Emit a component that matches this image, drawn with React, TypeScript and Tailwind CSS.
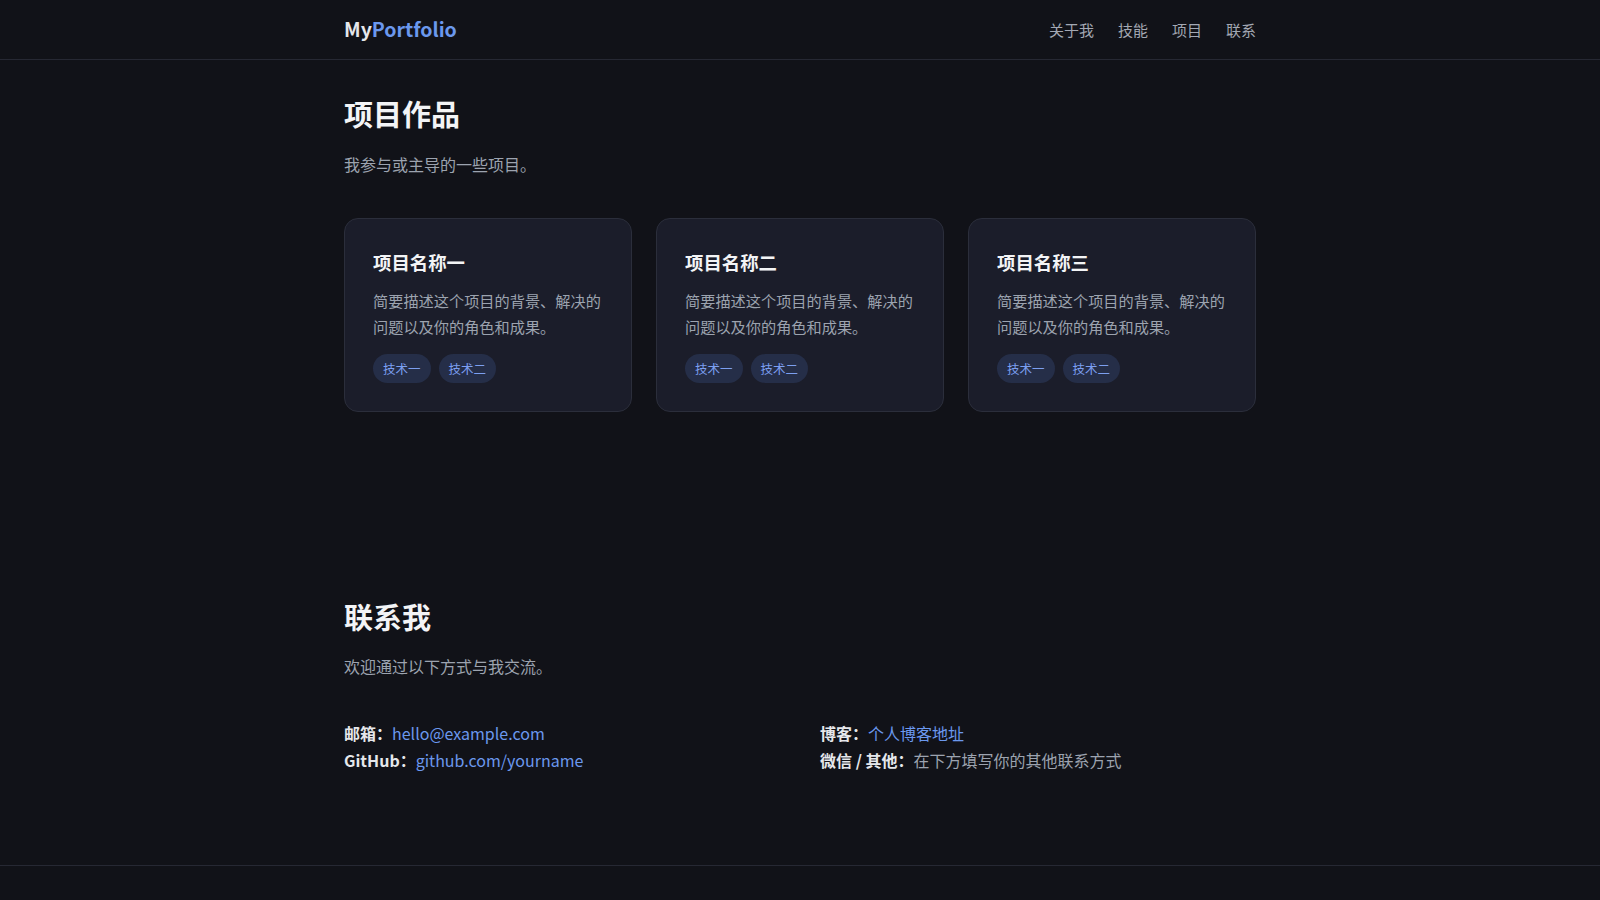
import React from 'react';

const navItems = ['关于我', '技能', '项目', '联系'];

const projects = [
  { title: '项目名称一', tags: ['技术一', '技术二'] },
  { title: '项目名称二', tags: ['技术一', '技术二'] },
  { title: '项目名称三', tags: ['技术一', '技术二'] },
];

const App: React.FC = () => {
  return (
    <div
      className="min-h-screen bg-[#111218] text-[#e5e7eb]"
      style={{ fontFamily: '"Noto Sans CJK SC", "Noto Sans", sans-serif' }}
    >
      <header className="border-b border-[#262833]">
        <div className="max-w-[960px] mx-auto px-6 h-[59px] flex items-center justify-between">
          <div className="text-[19.5px] font-bold leading-none -mt-[1px]">
            <span className="text-[#e5e7eb]">My</span>
            <span className="text-[#6b98ee]">Portfolio</span>
          </div>
          <nav className="flex items-center gap-6 text-[15px] text-[#a3a8b3] mt-[1px]">
            {navItems.map(item => (
              <a key={item} href="#" className="hover:text-white transition-colors">
                {item}
              </a>
            ))}
          </nav>
        </div>
      </header>

      <main className="max-w-[960px] mx-auto px-6">
        <section className="pt-[36px] pb-[187px]">
          <h2 className="text-[29px] font-bold leading-[35px] text-[#f3f4f6]">项目作品</h2>
          <p className="mt-[20px] text-[16px] leading-[26px] text-[#9ca3af]">我参与或主导的一些项目。</p>

          <div className="grid grid-cols-3 gap-6 mt-[41px]">
            {projects.map(p => (
              <div
                key={p.title}
                className="bg-[#1b1d2a] border border-[#2b2e3b] rounded-[14px] p-7"
              >
                <h3 className="mt-[1px] text-[18.4px] leading-[28px] font-bold text-[#f3f4f6]">{p.title}</h3>
                <p className="mt-[11px] text-[15.2px] leading-[26px] text-[#9ca3af]">
                  简要描述这个项目的背景、解决的问题以及你的角色和成果。
                </p>
                <div className="flex gap-2 mt-[15px]">
                  {p.tags.map(t => (
                    <span
                      key={t}
                      className="px-[10px] py-[5px] rounded-full bg-[#252e48] text-[#7c9ff0] text-[12.5px] leading-[19px]"
                    >
                      {t}
                    </span>
                  ))}
                </div>
              </div>
            ))}
          </div>
        </section>

        <section className="pb-[91px]">
          <h2 className="text-[29px] font-bold leading-[35px] text-[#f3f4f6]">联系我</h2>
          <p className="mt-[19px] text-[16px] leading-[26px] text-[#9ca3af]">欢迎通过以下方式与我交流。</p>

          <div className="grid grid-cols-2 gap-x-10 mt-[41px] text-[16px] leading-[27px]">
            <div>
              <p>
                <span className="font-bold text-[#e5e7eb]">邮箱：</span>
                <a href="#" className="text-[#6b98ee]">hello@example.com</a>
              </p>
              <p>
                <span className="font-bold text-[#e5e7eb]">GitHub：</span>
                <a href="#" className="text-[#6b98ee]">github.com/yourname</a>
              </p>
            </div>
            <div>
              <p>
                <span className="font-bold text-[#e5e7eb]">博客：</span>
                <a href="#" className="text-[#6b98ee]">个人博客地址</a>
              </p>
              <p>
                <span className="font-bold text-[#e5e7eb]">微信 / 其他：</span>
                <span className="text-[#9ca3af]">在下方填写你的其他联系方式</span>
              </p>
            </div>
          </div>
        </section>
      </main>

      <footer className="border-t border-[#262833] h-[80px]" />
    </div>
  );
};

export default App;
